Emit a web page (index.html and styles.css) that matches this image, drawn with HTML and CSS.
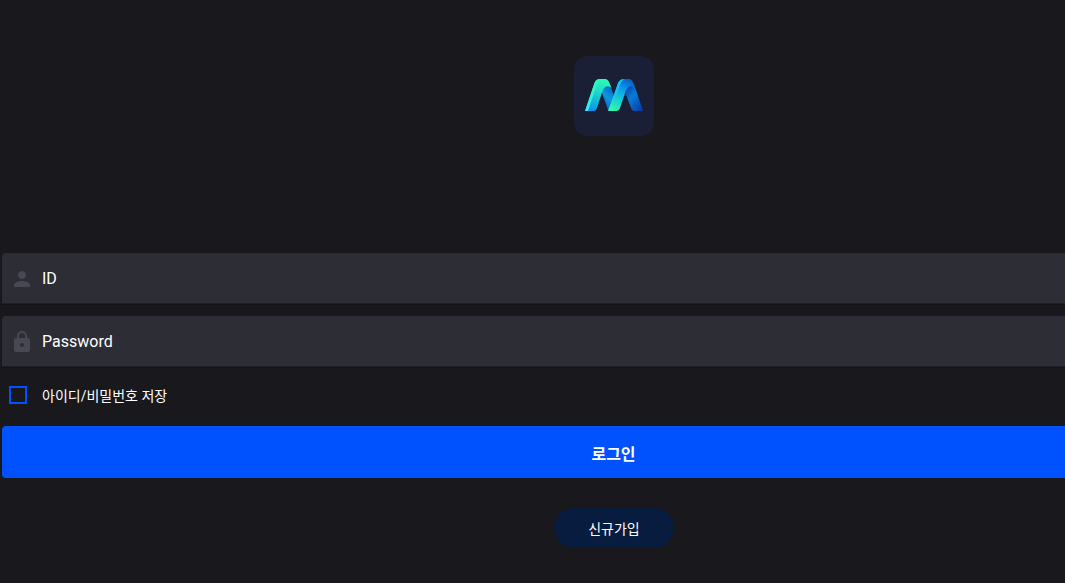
FILE: index.html
```html
<!DOCTYPE html>
<html lang="ko">
<head>
  <meta charset="UTF-8" />
  <meta name="viewport" content="width=device-width, initial-scale=1.0" />
  <title>로그인</title>
  <link rel="stylesheet" href="styles.css">
</head>
<body>
  <main class="login">
    <div class="logo">
      <svg width="80" height="80" viewBox="0 0 80 80">
        <defs>
          <linearGradient id="green" x1="0.7" y1="0" x2="0.5" y2="1">
            <stop offset="0" stop-color="#2ffbb0" />
            <stop offset="0.4" stop-color="#20dcc8" />
            <stop offset="1" stop-color="#0798ec" />
          </linearGradient>
          <linearGradient id="edge" x1="0" y1="0" x2="0" y2="1">
            <stop offset="0" stop-color="#2ffbb0" />
            <stop offset="1" stop-color="#3be8f0" />
          </linearGradient>
          <linearGradient id="middle" x1="0.8" y1="0" x2="0.3" y2="1">
            <stop offset="0" stop-color="#0750b4" />
            <stop offset="0.25" stop-color="#0878ce" />
            <stop offset="0.5" stop-color="#0c98de" />
            <stop offset="1" stop-color="#0760c0" />
          </linearGradient>
          <linearGradient id="rise" x1="0.75" y1="0" x2="0.3" y2="1">
            <stop offset="0" stop-color="#0a60c8" />
            <stop offset="0.35" stop-color="#0c9cf0" />
            <stop offset="0.65" stop-color="#18cbd8" />
            <stop offset="1" stop-color="#2ff5b0" />
          </linearGradient>
          <linearGradient id="fall" x1="0.2" y1="0" x2="0.8" y2="1">
            <stop offset="0" stop-color="#0740a8" />
            <stop offset="0.2" stop-color="#0750b4" />
            <stop offset="0.5" stop-color="#087cd4" />
            <stop offset="1" stop-color="#0740a8" />
          </linearGradient>
        </defs>
        <path fill="url(#middle)" d="M28 30h8.500l5 14 1 5-6 6h-2L28 37z" />
        <path fill="url(#green)" d="M11 55L20.500 27Q22 23 26 23H31Q34 23 35.500 27L37.500 32Q34 29 31.500 31Q29.500 32 28.500 35L23 52Q22 55 20 55z" />
        <path fill="url(#edge)" d="M11 55L20.500 27Q22 23 26 23Q24 25 22.500 29L14 55z" />
        <path fill="url(#fall)" d="M52 23H54Q58 23 60 28L69 55H60Q58 55 57 52L51 36z" />
        <path fill="url(#rise)" d="M34 55L44 27Q46 23 50 23H55Q57.500 23 59 27L60.500 31Q57 29 54.500 31Q52.500 32 51.500 36L46 52Q45 55 43 55z" />
        <path fill="#16c4f4" d="M40.500 38L44 27Q46 23 50 23Q47.500 25 46 29L42 40z" />
      </svg>
    </div>

    <form class="login-form">
      <div class="field">
        <svg class="field-icon" width="24" height="24" viewBox="0 0 24 24">
          <path d="M12 12c2.210 0 4-1.790 4-4s-1.790-4-4-4-4 1.790-4 4 1.790 4 4 4zm0 2c-2.670 0-8 1.340-8 4v2h16v-2c0-2.660-5.330-4-8-4z" />
        </svg>
        <input type="text" class="field-input" placeholder="ID" />
      </div>
      <div class="field">
        <svg class="field-icon" width="24" height="24" viewBox="0 0 24 24">
          <path d="M18 8h-1V6c0-2.760-2.240-5-5-5S7 3.240 7 6v2H6c-1.100 0-2 .9-2 2v10c0 1.100.9 2 2 2h12c1.100 0 2-.9 2-2V10c0-1.100-.9-2-2-2zm-6 9c-1.100 0-2-.9-2-2s.9-2 2-2 2 .9 2 2-.9 2-2 2zm3.100-9H8.900V6c0-1.710 1.390-3.100 3.100-3.100 1.710 0 3.100 1.390 3.100 3.100v2z" />
        </svg>
        <input type="password" class="field-input" placeholder="Password" />
      </div>
      <label class="save">
        <input type="checkbox" class="save-box" />
        <span>아이디/비밀번호 저장</span>
      </label>
      <button type="button" class="btn-login">로그인</button>
    </form>

    <button type="button" class="btn-join">신규가입</button>
  </main>
</body>
</html>
```

FILE: styles.css
```css
* { box-sizing: border-box; }
body { margin: 0; height: 583px; overflow: hidden; background: #19181d; color: #fff; font-family: Roboto, "Noto Sans CJK KR", sans-serif; }
.login { width: 1224px; margin-left: 2px; padding-top: 56px; display: flex; flex-direction: column; align-items: center; }
.logo { width: 80px; height: 80px; background: #1b1f35; border-radius: 14px; overflow: hidden; }
.logo svg { display: block; }

.login-form { width: 100%; margin-top: 117px; display: flex; flex-direction: column; }
.field { height: 51px; margin-bottom: 12px; padding: 0 8px; display: flex; align-items: center; background: #2d2d36; border-bottom: 1px solid #1f2024; border-radius: 4px 4px 0 0; box-shadow: 0 1px 0 #131317; }
.field-icon { flex: none; fill: #484852; margin-top: 2px; }
.field-input { flex: 1; height: 50px; margin-left: 8px; padding: 0; border: none; outline: none; background: none; color: #fff; font: 400 16px Roboto, "Noto Sans CJK KR", sans-serif; }
.field-input::placeholder { color: #fff; opacity: 1; }

.save { height: 24px; margin: 4px 0 19px; padding-left: 7px; display: flex; align-items: center; gap: 15px; font-size: 14px; }
.save-box { appearance: none; width: 18px; height: 18px; margin: 0; border: 2px solid #0052ff; }

button { padding: 0; border: none; color: #fff; font-family: Roboto, "Noto Sans CJK KR", sans-serif; cursor: pointer; }
.btn-login { height: 52px; padding: 2px 1px 0 0; background: #0052ff; border-radius: 4px; font-size: 16px; font-weight: 700; }
.btn-join { width: 120px; height: 40px; margin-top: 30px; background: #081c40; border-radius: 20px; font-size: 14px; }
```
